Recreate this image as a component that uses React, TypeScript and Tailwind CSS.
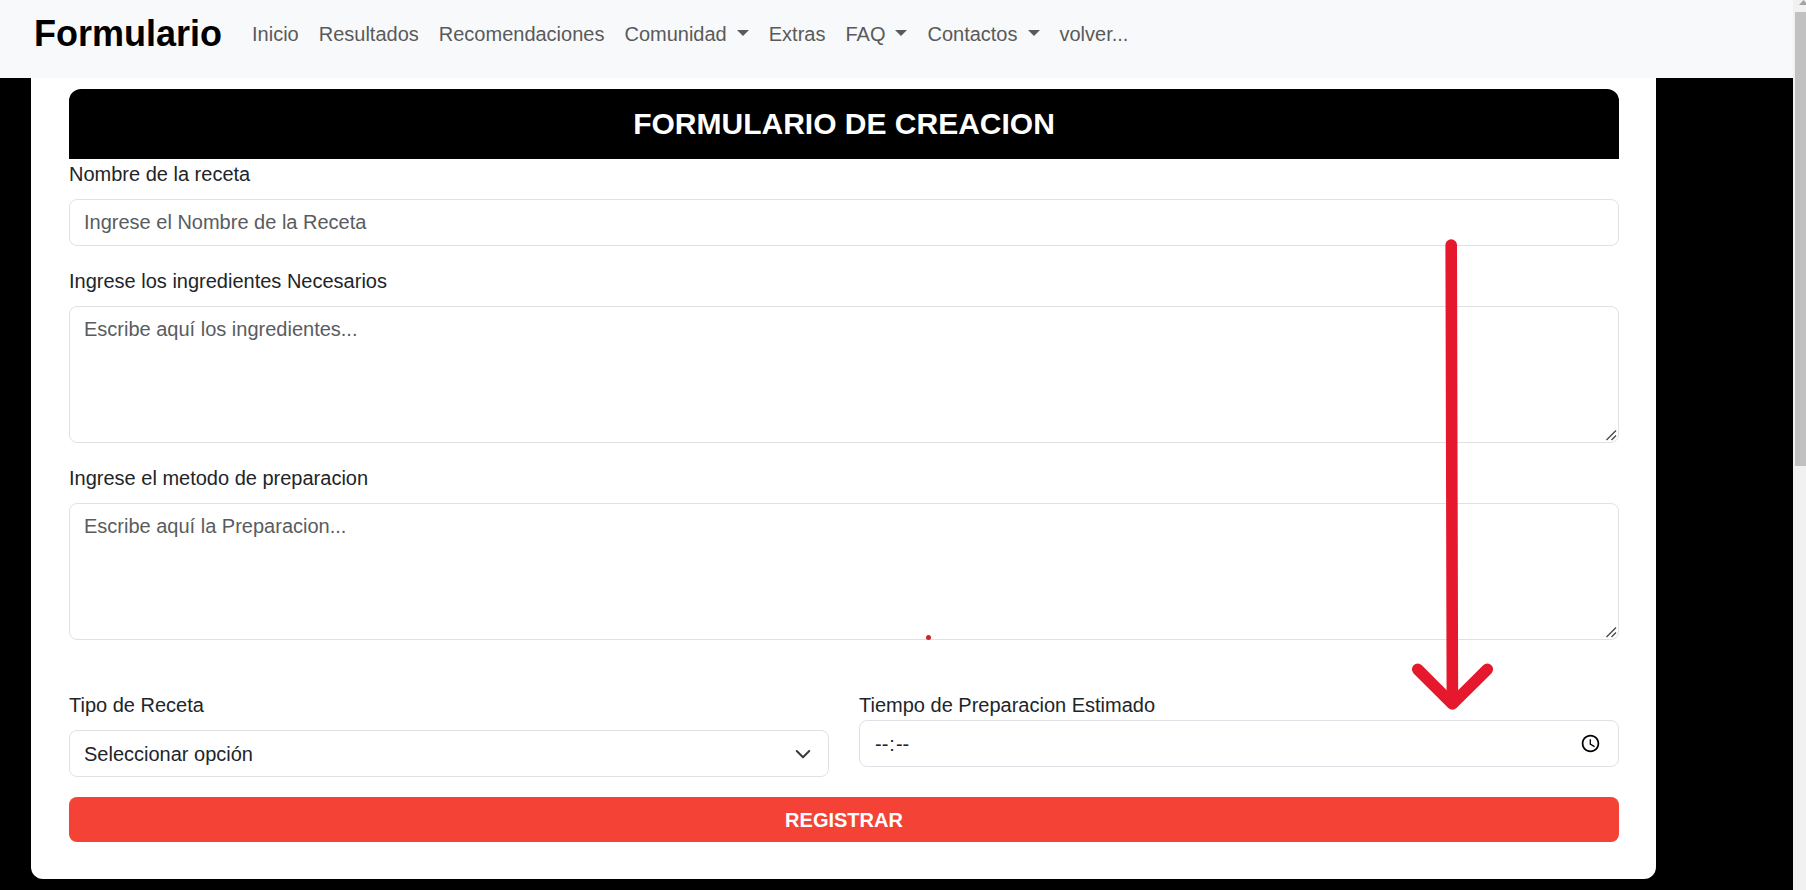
type NavItem = { label: string; dropdown?: boolean };

const navItems: NavItem[] = [
  { label: "Inicio" },
  { label: "Resultados" },
  { label: "Recomendaciones" },
  { label: "Comunidad", dropdown: true },
  { label: "Extras" },
  { label: "FAQ", dropdown: true },
  { label: "Contactos", dropdown: true },
  { label: "volver..." },
];

const control =
  "block w-full rounded-lg border border-[#dee2e6] bg-white px-[14px] text-[20px] leading-[30px] text-[#212529] placeholder:text-[#595c5f] placeholder:opacity-100 outline-none focus:border-[#86b7fe]";

function Navbar() {
  return (
    <nav className="flex h-[78px] items-start bg-[#f8f9fa] pl-[34px]">
      <a href="#" className="mr-5 pt-[7px] text-[36px] font-bold leading-[54px] text-black">
        Formulario
      </a>
      <ul className="flex pt-[19px] text-[20px] leading-[30px] text-[#595a5b]">
        {navItems.map((item) => (
          <li key={item.label}>
            <a href="#" className="flex items-center whitespace-nowrap px-[10px]">
              {item.label}
              {item.dropdown && (
                <svg className="-mt-[2px] ml-[10px]" width="12" height="6" viewBox="0 0 12 6" aria-hidden="true">
                  <path d="M0 0h12L6 6z" fill="currentColor" />
                </svg>
              )}
            </a>
          </li>
        ))}
      </ul>
    </nav>
  );
}

function TextArea({ id, label, placeholder }: { id: string; label: string; placeholder: string }) {
  return (
    <div>
      <label htmlFor={id} className="mb-[10px] block">
        {label}
      </label>
      <div className="grid">
        <textarea
          id={id}
          placeholder={placeholder}
          className={`${control} col-start-1 row-start-1 h-[137px] py-[7px] [&::-webkit-resizer]:hidden`}
        />
        <svg
          className="pointer-events-none col-start-1 row-start-1 mb-[2px] mr-[2px] self-end justify-self-end"
          width="12"
          height="12"
          viewBox="0 0 12 12"
          stroke="#4a4a4a"
          strokeWidth="1.4"
          aria-hidden="true"
        >
          <path d="M1.500 11L11 1.500M6.500 11L11 6.500" />
        </svg>
      </div>
    </div>
  );
}

function Scrollbar() {
  return (
    <div aria-hidden="true" className="flex w-[13px] shrink-0 flex-col bg-[#f1f1f1] pl-[2px]">
      <svg className="h-3 w-[11px]" viewBox="0 0 11 12">
        <path d="M4 5L8.500 0L11 2.800V5z" fill="#a3a3a3" />
      </svg>
      <div className="h-[454px] bg-[#c1c1c1]" />
    </div>
  );
}

function Annotations() {
  return (
    <>
      <svg
        className="pointer-events-none absolute right-[162px] top-[159px]"
        width="84"
        height="476"
        viewBox="0 0 84 476"
        fill="none"
        stroke="#e5182d"
        strokeWidth="11.6"
        strokeLinecap="round"
        strokeLinejoin="round"
        aria-hidden="true"
      >
        <path d="M41.200 8L42.400 466" />
        <path d="M7.700 432.300L42.400 467L77.300 432.300" />
      </svg>
      <span className="pointer-events-none absolute left-[895px] top-[557px] size-[5px] rounded-full bg-[#c9252f]" />
    </>
  );
}

export default function App() {
  return (
    <div className="flex min-h-screen bg-black font-['Liberation_Sans',Arial,sans-serif] text-[20px] leading-[30px] text-[#212529]">
      <div className="min-w-0 flex-1">
        <Navbar />
        <main className="relative ml-[31px] mr-[137px] rounded-b-xl bg-white pb-[37px] pl-[38px] pr-[37px] pt-[11px]">
          <h1 className="rounded-t-xl bg-black py-[15px] text-center text-[30px] font-bold leading-[40px] text-white">
            FORMULARIO DE CREACION
          </h1>
          <form onSubmit={(e) => e.preventDefault()}>
            <div className="flex flex-col gap-5">
              <div>
                <label htmlFor="nombre" className="mb-[10px] block">
                  Nombre de la receta
                </label>
                <input
                  id="nombre"
                  type="text"
                  placeholder="Ingrese el Nombre de la Receta"
                  className={`${control} h-[47px]`}
                />
              </div>
              <TextArea
                id="ingredientes"
                label="Ingrese los ingredientes Necesarios"
                placeholder="Escribe aquí los ingredientes..."
              />
              <TextArea
                id="preparacion"
                label="Ingrese el metodo de preparacion"
                placeholder="Escribe aquí la Preparacion..."
              />
            </div>
            <div className="mb-5 mt-[50px] grid grid-cols-2 gap-[30px]">
              <div>
                <label htmlFor="tipo" className="mb-[10px] block">
                  Tipo de Receta
                </label>
                <div className="grid items-center">
                  <select id="tipo" className={`${control} col-start-1 row-start-1 h-[47px] appearance-none`}>
                    <option>Seleccionar opción</option>
                  </select>
                  <svg
                    className="pointer-events-none col-start-1 row-start-1 mr-4 justify-self-end"
                    width="20"
                    height="15"
                    viewBox="0 0 16 12"
                    fill="none"
                    stroke="#343a40"
                    strokeWidth="1.6"
                    strokeLinecap="round"
                    strokeLinejoin="round"
                    aria-hidden="true"
                  >
                    <path d="M3 4l5 5 5-5" />
                  </svg>
                </div>
              </div>
              <div>
                <label htmlFor="tiempo" className="block">
                  Tiempo de Preparacion Estimado
                </label>
                <input
                  id="tiempo"
                  type="time"
                  className={`${control} h-[47px] [&::-webkit-datetime-edit-ampm-field]:hidden`}
                />
              </div>
            </div>
            <button
              type="submit"
              className="block h-[45px] w-full rounded-lg bg-[#f44336] text-center text-[20px] font-bold leading-[30px] text-white"
            >
              REGISTRAR
            </button>
          </form>
          <Annotations />
        </main>
      </div>
      <Scrollbar />
    </div>
  );
}
